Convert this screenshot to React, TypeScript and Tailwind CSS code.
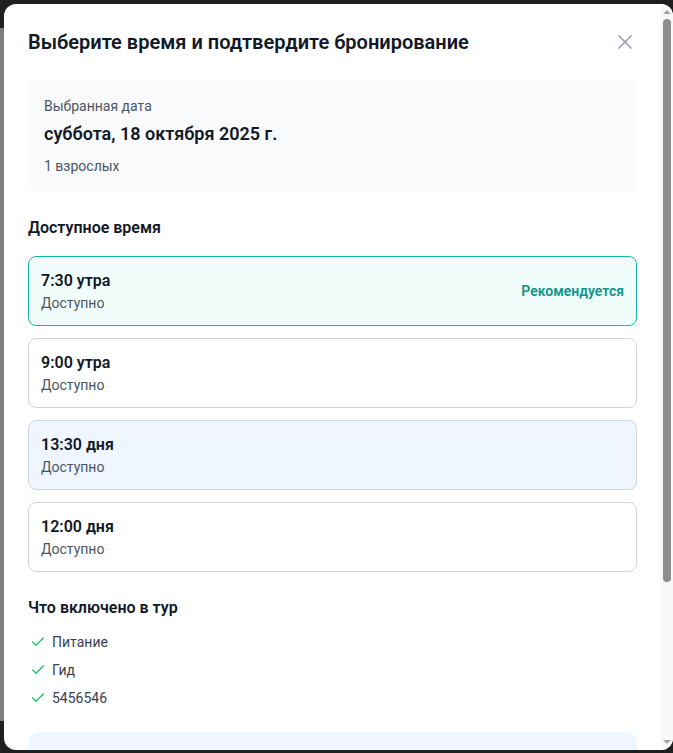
import { Check, X } from "lucide-react";

const slots = [
  { time: "7:30 утра", status: "Доступно", kind: "recommended" },
  { time: "9:00 утра", status: "Доступно", kind: "plain" },
  { time: "13:30 дня", status: "Доступно", kind: "hover" },
  { time: "12:00 дня", status: "Доступно", kind: "plain" },
];

const included = ["Питание", "Гид", "5456546"];

const slotStyles: Record<string, string> = {
  recommended: "border-[#14b8a6] bg-[#f0fdfa]",
  plain: "border-[#d1d5db] bg-white",
  hover: "border-[#d1d5db] bg-[#eff6ff]",
};

export default function App() {
  return (
    <div className="relative h-screen overflow-hidden font-['Roboto',sans-serif]">
      {/* dimmed page behind the dialog */}
      <div className="flex h-full flex-col">
        <div className="h-7 bg-[#1f1f1f]" />
        <div className="flex-1 bg-[#7f7f7f]" />
        <div className="h-8 bg-[#1f1f1f]" />
      </div>

      <div className="absolute left-1 top-1 flex h-[746px] w-[669px] overflow-hidden rounded-xl bg-white">
        <div className="flex-1 overflow-hidden px-6 pt-6">
          <div className="flex items-center justify-between">
            <h2 className="text-xl font-semibold text-[#111827]">
              Выберите время и подтвердите бронирование
            </h2>
            <button className="text-[#9ca3af]">
              <X size={24} strokeWidth={1.75} />
            </button>
          </div>

          <div className="mt-6 rounded-xl bg-[#f9fafb] p-4">
            <p className="text-sm text-[#4b5563]">Выбранная дата</p>
            <p className="mt-1 text-lg font-semibold text-[#111827]">
              суббота, 18 октября 2025 г.
            </p>
            <p className="mt-2 text-sm text-[#4b5563]">1 взрослых</p>
          </div>

          <h3 className="mt-6 mb-4 text-base font-semibold text-[#111827]">
            Доступное время
          </h3>
          <div className="flex flex-col gap-3">
            {slots.map((s) => (
              <div
                key={s.time}
                className={`flex items-center justify-between rounded-lg border p-3 ${slotStyles[s.kind]}`}
              >
                <div>
                  <p className="text-base font-semibold text-[#111827]">{s.time}</p>
                  <p className="text-sm text-[#4b5563]">{s.status}</p>
                </div>
                {s.kind === "recommended" && (
                  <span className="text-sm font-semibold text-[#0d9488]">Рекомендуется</span>
                )}
              </div>
            ))}
          </div>

          <h3 className="mt-6 mb-3 text-base font-semibold text-[#111827]">
            Что включено в тур
          </h3>
          <ul className="flex flex-col gap-2">
            {included.map((item) => (
              <li key={item} className="flex items-center gap-1.5 text-sm text-[#374151]">
                <Check size={16} className="ml-0.5 text-[#22c55e]" />
                {item}
              </li>
            ))}
          </ul>

          <div className="mt-6 h-32 rounded-xl bg-[#eff6ff]" />
        </div>

        {/* scrollbar */}
        <div className="flex w-3 flex-col items-center bg-[#f8f8f8]">
          <div className="mt-1.5 h-0 w-0 border-x-4 border-b-4 border-x-transparent border-b-[#a3a3a3]" />
          <div className="mt-[5px] h-[563px] w-2 rounded-full bg-[#8d8d8d]" />
          <div className="flex-1" />
          <div className="mb-1.5 h-0 w-0 border-x-4 border-t-4 border-x-transparent border-t-[#a3a3a3]" />
        </div>
      </div>
    </div>
  );
}
